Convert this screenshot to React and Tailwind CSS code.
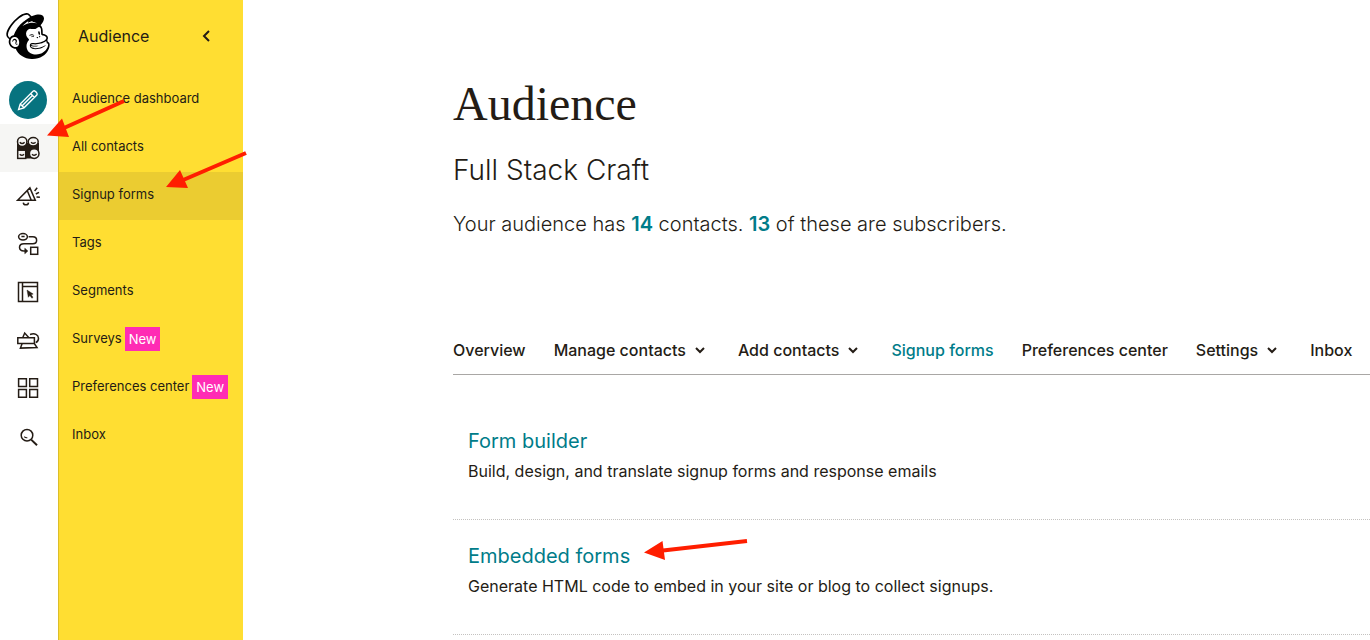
import React from "react";
import { SiMailchimp } from "react-icons/si";

function Icon({ children }) {
  return (
    <svg viewBox="0 0 24 24" className="size-6" fill="none" stroke="#241c15" strokeWidth="1.5" aria-hidden="true">
      {children}
    </svg>
  );
}

const railItems = [
  {
    label: "Audience",
    active: true,
    icon: (
      <Icon>
        <path d="M1 7h22v11l-5 4.500H1z" fill="#241c15" stroke="none" />
        <circle cx="6.2" cy="5.7" r="4.7" fill="#f6f6f4" />
        <ellipse cx="17.2" cy="5.7" rx="5" ry="4.2" fill="#f6f6f4" />
        <rect x="1.7" y="14.200" width="8" height="8.2" fill="#f6f6f4" />
        <circle cx="18.2" cy="17.6" r="4.8" fill="#f6f6f4" />
        <path d="M3.800 6.2q2.200 2.600 4.800 0M15 6.2q2.300 2.200 4.600 0M3.800 18.200q2 2.200 4.200 0M16 18.200q2.400 2.200 4.600-.2" strokeWidth="1.4" />
      </Icon>
    ),
  },
  {
    label: "Campaigns",
    icon: (
      <Icon>
        <path d="M1.6 16.3 13.9 3.9l5.4 12.4zM11.3 6.7l4 9.6M7.3 18.6q.2 2.2 2.6 2.2t2.6-2.2M18.6 7l2.6-3.2M19.8 10l3.2-1.7M20.5 13l3.4.3" />
      </Icon>
    ),
  },
  {
    label: "Automations",
    icon: (
      <Icon>
        <ellipse cx="7" cy="4.8" rx="4.4" ry="3.2" />
        <path d="M5.4 4.6h3.2M12.6 4.8h4.2c5 0 5.2 6.8 0 6.9H8c-6 0-6 7.3 0 7.3h3" />
        <path d="m8.8 16.3 3 2.7-3 2.7z" fill="#241c15" strokeWidth=".6" />
        <rect x="14.7" y="15.3" width="7" height="7" />
      </Icon>
    ),
  },
  {
    label: "Website",
    icon: (
      <Icon>
        <path d="M2.5 2.5h19v19h-19zM6.5 2.5v19M6.5 6.4h15" />
        <path d="m11 10 1.3 7.3 1.6-1.7 2 2.7 1.1-1-1.8-2.5 2-.8z" fill="#241c15" strokeWidth=".4" />
      </Icon>
    ),
  },
  {
    label: "Content Studio",
    icon: (
      <Icon>
        <path d="M1.8 9.7h16.6v5.7H1.8zM6.8 9.5 8.7 5l4 4.4M6.2 15.5 4.4 20.1l16.6-.6-2.7-4M14 6.5c4.8-1.7 8.3 0 8.5 3.8.1 2-1 3.5-2.7 4.4" />
      </Icon>
    ),
  },
  {
    label: "Integrations",
    icon: (
      <Icon>
        <path d="M2.6 2.7h7.8v7.8H2.6zM13.7 2.7h7.8v7.8h-7.8zM2.6 13.5h7.8v7.8H2.6zM13.7 13.5h7.8v7.8h-7.8z" />
      </Icon>
    ),
  },
  {
    label: "Search",
    icon: (
      <Icon>
        <circle cx="11" cy="11.2" r="5.8" />
        <path d="M15.2 15.6 21 21.2" strokeWidth="2" />
        <path d="M8.3 12.6q1.3 1.6 3 1" strokeWidth="1.2" />
      </Icon>
    ),
  },
];

const menu = [
  { label: "Audience dashboard" },
  { label: "All contacts" },
  { label: "Signup forms", active: true },
  { label: "Tags" },
  { label: "Segments" },
  { label: "Surveys", isNew: true },
  { label: "Preferences center", isNew: true },
  { label: "Inbox" },
];

const tabs = [
  { label: "Overview" },
  { label: "Manage contacts", menu: true },
  { label: "Add contacts", menu: true },
  { label: "Signup forms", active: true },
  { label: "Preferences center" },
  { label: "Settings", menu: true },
  { label: "Inbox" },
];

const forms = [
  { title: "Form builder", text: "Build, design, and translate signup forms and response emails" },
  { title: "Embedded forms", text: "Generate HTML code to embed in your site or blog to collect signups." },
];

function Rail() {
  return (
    <nav aria-label="Main" className="flex w-[58px] shrink-0 flex-col">
      <a href="#home" aria-label="Home" className="flex h-[76px] items-center pb-1 pl-[5px]">
        <SiMailchimp className="size-[46px] text-black" />
      </a>
      <button type="button" aria-label="Create" className="flex h-12 items-center pl-[9px]">
        <span className="flex size-[38px] items-center justify-center rounded-full bg-[#07737f]">
          <svg viewBox="0 0 24 24" className="size-6" fill="none" stroke="#fff" strokeWidth="1.4" aria-hidden="true">
            <path d="M2.6 21.4 4.2 16 17 3.2q1.2-.9 2.4.2l1.2 1.2q1.1 1.200.2 2.400L8 19.800zM4.200 16 8 19.800M14.600 5.600l3.800 3.800M6.200 17.800 16.400 7.600" />
          </svg>
        </span>
      </button>
      {railItems.map((item) => (
        <a
          key={item.label}
          href="#nav"
          aria-label={item.label}
          className={`flex h-12 items-center pl-4 ${item.active ? "bg-[#f6f6f4]" : ""}`}
        >
          {item.icon}
        </a>
      ))}
    </nav>
  );
}

function Sidebar() {
  return (
    <aside className="w-[185px] shrink-0 border-l border-[#dcbe2a] bg-[#ffde32]">
      <div className="flex h-[76px] items-center justify-between pr-7 pb-1 pl-[19px]">
        <h2 className="text-base">Audience</h2>
        <button type="button" aria-label="Collapse menu" className="p-1">
          <svg viewBox="0 0 10 14" className="h-[14px] w-[10px]" fill="none" stroke="#241c15" strokeWidth="2" aria-hidden="true">
            <path d="M8 2 3 7l5 5" />
          </svg>
        </button>
      </div>
      <ul>
        {menu.map((item) => (
          <li key={item.label}>
            <a
              href="#menu"
              className={`flex h-12 items-center gap-[3px] pb-[2px] pl-[13px] text-[13px] whitespace-nowrap ${item.active ? "bg-[#ebcc31]" : ""}`}
            >
              {item.label}
              {item.isNew && <span className="bg-[#ff2cb4] px-1 text-[13px] leading-6 text-white">New</span>}
            </a>
          </li>
        ))}
      </ul>
    </aside>
  );
}

function Tab({ tab }) {
  if (tab.menu) {
    return (
      <button type="button" className="flex items-center gap-2">
        {tab.label}
        <svg viewBox="0 0 16 16" className="size-4" fill="none" stroke="#241c15" strokeWidth="2" aria-hidden="true">
          <path d="m2 6 4 4 4-4" />
        </svg>
      </button>
    );
  }
  return (
    <a href="#tab" className={tab.active ? "text-[#007c89]" : ""}>
      {tab.label}
    </a>
  );
}

function Arrows() {
  return (
    <svg
      viewBox="0 0 760 640"
      className="pointer-events-none absolute top-0 left-0 h-[640px] w-[760px]"
      fill="#ff1e00"
      stroke="#ff1e00"
      aria-hidden="true"
    >
      <path d="M124 101 64 128M246 153 182 180.500M747 541 663 550.500" strokeWidth="4" />
      <path d="m47 135.500 15-17 7 18.500zM166 187l14-17 8 18zM644 552.500l18.500-11.500 2.500 19z" stroke="none" />
    </svg>
  );
}

export default function App() {
  return (
    <div className="relative flex min-h-screen overflow-x-hidden bg-white font-['Inter','Liberation_Sans',sans-serif] text-[#241c15]">
      <Rail />
      <Sidebar />
      <main className="min-w-0 flex-1 pl-[210px]">
        <header className="pt-[76px]">
          <h1 className="font-['Liberation_Serif',serif] text-[48px] leading-[56px]">Audience</h1>
          <p className="mt-5 text-[28px] leading-9 font-light">Full Stack Craft</p>
          <p className="mt-5 text-[20px] leading-8 font-light">
            Your audience has{" "}
            <a href="#contacts" className="font-semibold text-[#007c89]">14</a> contacts.{" "}
            <a href="#subscribers" className="font-semibold text-[#007c89]">13</a> of these are subscribers.
          </p>
        </header>
        <nav
          aria-label="Audience"
          className="mt-[86px] flex h-[49px] gap-7 border-b border-[#a9a7a5] text-base font-medium whitespace-nowrap"
        >
          {tabs.map((tab) => (
            <div key={tab.label} className="flex h-12 items-center">
              <Tab tab={tab} />
            </div>
          ))}
        </nav>
        <ul className="pt-[30px]">
          {forms.map((form) => (
            <li key={form.title} className="h-[115px] border-b border-dotted border-[#c4c2c0] pt-5 pl-[15px]">
              <a href="#form" className="block text-[20px] leading-8 text-[#007c89]">
                {form.title}
              </a>
              <p className="text-base leading-7">{form.text}</p>
            </li>
          ))}
        </ul>
      </main>
      <Arrows />
    </div>
  );
}
